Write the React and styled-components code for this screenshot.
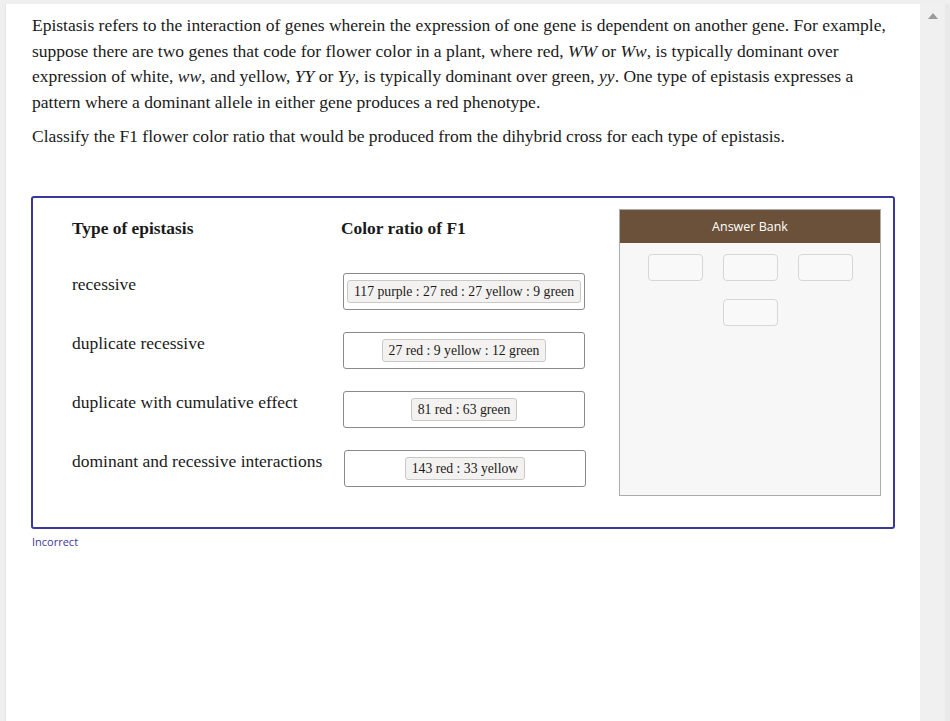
import React from "react";
import styled, { createGlobalStyle } from "styled-components";

const Global = createGlobalStyle`
  html, body { margin: 0; padding: 0; background: #efefef; }
  body { font-family: "Liberation Serif", "Times New Roman", serif; color: #1a1a1a; }
  #root { height: 721px; overflow: hidden; }
`;

const Page = styled.div`
  display: flex;
  height: 721px;
  padding: 4px 0 0 6px;
  box-sizing: border-box;
`;

const Panel = styled.main`
  width: 914px;
  background: #fff;
  padding: 9px 0 0 26px;
  box-sizing: border-box;
  box-shadow: -1px 0 1px rgba(0,0,0,0.04);
`;

const Scrollbar = styled.div`
  width: 25px;
  background: #f0f0f0;
  border-right: 5px solid #e9e9e9;
  display: flex;
  justify-content: center;
  padding-top: 8px;
  box-sizing: content-box;
`;

const Para = styled.p`
  margin: 0 0 8px;
  font-size: 17.5px;
  line-height: 25.7px;
  white-space: nowrap;
  color: #1a1a1a;
  em { font-style: italic; }
`;

const Box = styled.section`
  margin: 46px 0 0 -1px;
  width: 864px;
  box-sizing: border-box;
  border: 2px solid #3b389c;
  border-radius: 3px;
  display: flex;
  justify-content: space-between;
  padding: 11px 12px 0 39px;
  min-height: 333px;
`;

const Left = styled.div`
  display: flex;
  flex-direction: column;
  padding-top: 9px;
`;

const HeaderRow = styled.div`
  display: flex;
  margin-bottom: 35px;
`;

const Head = styled.div`
  width: ${p => p.$w}px;
  font-weight: bold;
  font-size: 17.4px;
  line-height: 20px;
`;

const Rows = styled.div`
  display: flex;
  flex-direction: column;
  gap: 22px;
`;

const Row = styled.div`
  display: flex;
  align-items: flex-start;
`;

const Label = styled.div`
  width: 271px;
  font-size: 17.5px;
  line-height: 20px;
  padding-top: 1px;
`;

const Drop = styled.div`
  width: 242px;
  height: 37px;
  box-sizing: border-box;
  border: 1.5px solid #8a8a8a;
  border-radius: 3px;
  display: flex;
  align-items: center;
  justify-content: center;
  margin-left: ${p => p.$shift || 0}px;
`;

const Chip = styled.div`
  height: 23px;
  box-sizing: border-box;
  padding: 0 6px;
  background: #f4f2f0;
  border: 1px solid #c9c9c9;
  border-radius: 3px;
  font-size: 13.7px;
  line-height: 21px;
  white-space: nowrap;
  color: #1a1a1a;
`;

const Bank = styled.aside`
  width: 262px;
  height: 287px;
  box-sizing: border-box;
  border: 1px solid #acacac;
  background: #f7f7f7;
  display: flex;
  flex-direction: column;
`;

const BankHead = styled.div`
  height: 33px;
  background: #6b5139;
  color: #fff;
  font-family: "Open Sans", "Liberation Sans", sans-serif;
  font-size: 12.5px;
  display: flex;
  align-items: center;
  justify-content: center;
`;

const Slots = styled.div`
  display: flex;
  flex-wrap: wrap;
  justify-content: center;
  gap: 18px 20px;
  padding: 11px 24px 0;
`;

const Slot = styled.div`
  width: 55px;
  height: 27px;
  box-sizing: border-box;
  border: 1px solid #d6d6d6;
  border-radius: 4px;
  background: #f9f9f9;
`;

const Status = styled.div`
  margin-top: 5px;
  font-family: "Open Sans", "Liberation Sans", sans-serif;
  font-size: 11px;
  font-weight: 500;
  color: #3b389c;
`;

const rows = [
  { label: "recessive", chip: "117 purple : 27 red : 27 yellow : 9 green" },
  { label: "duplicate recessive", chip: "27 red : 9 yellow : 12 green" },
  { label: "duplicate with cumulative effect", chip: "81 red : 63 green" },
  { label: "dominant and recessive interactions", chip: "143 red : 33 yellow", shift: 1 },
];

export default function App() {
  return (
    <>
      <Global />
      <Page>
        <Panel>
          <Para>
            Epistasis refers to the interaction of genes wherein the expression of one gene is dependent on another gene. For example,<br />
            suppose there are two genes that code for flower color in a plant, where red, <em>WW</em> or <em>Ww</em>, is typically dominant over<br />
            expression of white, <em>ww</em>, and yellow, <em>YY</em> or <em>Yy</em>, is typically dominant over green, <em>yy</em>. One type of epistasis expresses a<br />
            pattern where a dominant allele in either gene produces a red phenotype.
          </Para>
          <Para>Classify the F1 flower color ratio that would be produced from the dihybrid cross for each type of epistasis.</Para>
          <Box>
            <Left>
              <HeaderRow>
                <Head $w={269}>Type of epistasis</Head>
                <Head $w={244}>Color ratio of F1</Head>
              </HeaderRow>
              <Rows>
                {rows.map(r => (
                  <Row key={r.label}>
                    <Label>{r.label}</Label>
                    <Drop $shift={r.shift}><Chip>{r.chip}</Chip></Drop>
                  </Row>
                ))}
              </Rows>
            </Left>
            <Bank>
              <BankHead>Answer Bank</BankHead>
              <Slots>
                <Slot /><Slot /><Slot /><Slot />
              </Slots>
            </Bank>
          </Box>
          <Status>Incorrect</Status>
        </Panel>
        <Scrollbar>
          <svg width="12" height="8" viewBox="0 0 12 8">
            <polygon points="6,1 11,7 1,7" fill="#9a9a9a" />
          </svg>
        </Scrollbar>
      </Page>
    </>
  );
}
